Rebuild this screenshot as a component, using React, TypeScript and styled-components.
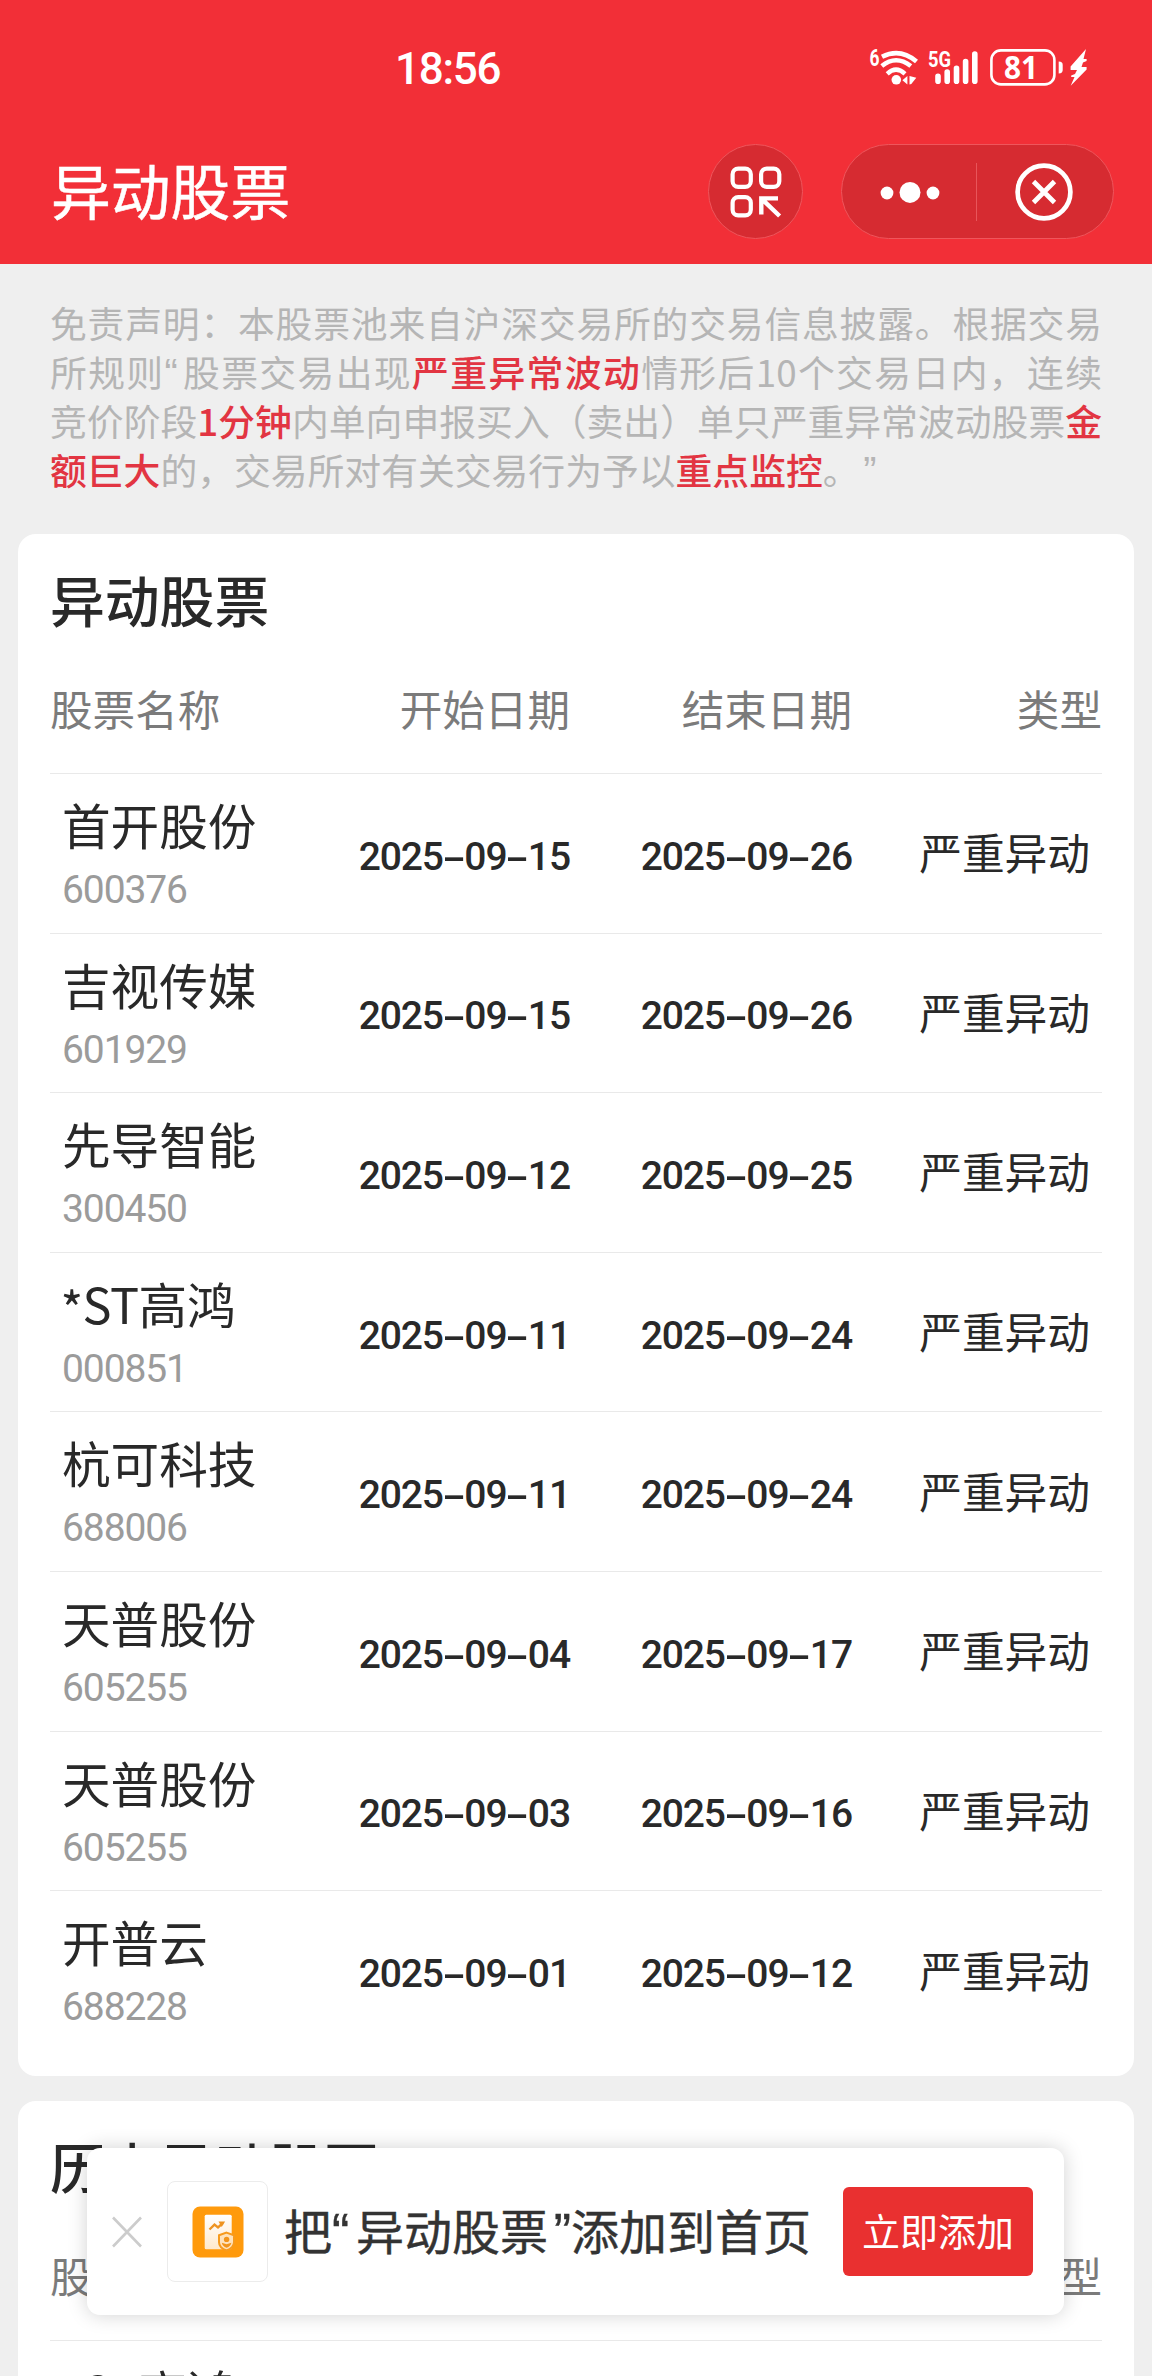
import React from 'react';
import styled, { createGlobalStyle } from 'styled-components';

const CJK = `'Noto Sans CJK SC', 'Noto Sans', sans-serif`;
const NUM = `Roboto, 'Noto Sans CJK SC', sans-serif`;

const GlobalStyle = createGlobalStyle`
  * { box-sizing: border-box; }
  body { margin: 0; background: #efefef; font-family: ${CJK}; }
`;

const Screen = styled.main`
  position: relative;
  width: 1152px;
  height: 2376px;
  overflow: hidden;
  background: #efefef;
  color: #292929;
`;

const TopArea = styled.header`
  height: 264px;
  background: #f22f37;
  color: #fff;
`;

const StatusBar = styled.div`
  display: flex;
  justify-content: space-between;
  align-items: center;
  height: 134px;
  padding: 0 62px 0 395px;
`;

const Clock = styled.time`
  font: 500 44px/50px ${NUM};
  letter-spacing: -1.3px;
  padding-top: 3px;
`;

const NavBar = styled.div`
  display: flex;
  align-items: flex-start;
  height: 130px;
  padding: 10px 38px 0 51px;
`;

const NavTitle = styled.h1`
  flex: 1;
  margin: 0;
  font-size: 59.8px;
  font-weight: 400;
  line-height: 90px;
  -webkit-text-stroke: 0.5px #fff;
`;

const RoundButton = styled.button`
  display: grid;
  place-items: center;
  width: 95px;
  height: 95px;
  padding: 0;
  margin-right: 38px;
  border: 1.5px solid #ef565c;
  border-radius: 50%;
  background: #d62b31;
`;

const Capsule = styled.div`
  display: flex;
  align-items: center;
  width: 273px;
  height: 95px;
  border: 1.5px solid #ef565c;
  border-radius: 48px;
  background: #d62b31;
`;

const CapsuleButton = styled.button<{ $w: number; $inset?: number }>`
  display: grid;
  place-items: center;
  width: ${(p) => p.$w}px;
  height: 100%;
  padding: 0 0 0 ${(p) => p.$inset ?? 0}px;
  border: 0;
  background: none;
`;

const CapsuleDivider = styled.span`
  width: 1px;
  height: 58px;
  background: #e8555a;
`;

const Notice = styled.section`
  height: 270px;
  padding: 34px 50px 0;
  color: #b5b5b5;
`;

const NoticeLine = styled.p<{ $last?: boolean }>`
  margin: 0;
  font-size: 36.8px;
  line-height: 49px;
  white-space: nowrap;
  text-align: justify;
  text-align-last: ${(p) => (p.$last ? 'left' : 'justify')};
`;

const Mark = styled.strong`
  font-weight: 500;
  color: #e23542;
`;

const Quote = styled.span<{ $w: number; $align?: string }>`
  display: inline-block;
  width: ${(p) => p.$w}px;
  font-family: 'Liberation Sans', sans-serif;
  font-size: 1.08em;
  line-height: 1;
  text-align: ${(p) => p.$align ?? 'left'};
  text-align-last: ${(p) => p.$align ?? 'left'};
`;

const Card = styled.section`
  margin: 0 18px 25px;
  padding: 31px 32px 0;
  border-radius: 18px;
  background: #fff;
`;

const StockCard = styled(Card)`
  height: 1542px;
`;

const CardTitle = styled.h2`
  margin: 0;
  font-size: 54.8px;
  font-weight: 500;
  line-height: 67px;
`;

const Row = styled.div`
  display: grid;
  grid-template-columns: 238px 282px 282px 250px;
  align-items: center;
  height: 159.6px;
  border-bottom: 1px solid #e9e9e9;
  &:last-child { border-bottom: 0; }
`;

const HeadRow = styled(Row)`
  height: 142px;
  padding-top: 11px;
`;

const HeadCell = styled.span<{ $left?: boolean }>`
  font-size: 42.6px;
  line-height: 60px;
  color: #7b7b7b;
  text-align: ${(p) => (p.$left ? 'left' : 'right')};
`;

const StockCell = styled.div`
  display: flex;
  flex-direction: column;
  gap: 17px;
  align-self: start;
  padding: 20px 0 0 12px;
  white-space: nowrap;
`;

const StockName = styled.span`
  font-size: 48.6px;
  line-height: 60px;
`;

const Star = styled.span`
  display: inline-block;
  width: 20.5px;
  text-indent: -1.5px;
  transform: translateY(4px);
`;

const Latin = styled.span`
  letter-spacing: -0.5px;
`;

const StockCode = styled.span`
  font: 400 39px/38px ${NUM};
  letter-spacing: -1.1px;
  color: #9b9b9b;
`;

const DateCell = styled.span`
  padding-top: 7px;
  font: 500 39px/50px ${NUM};
  letter-spacing: -1.1px;
  text-align: right;
`;

const Dash = styled.span`
  display: inline-block;
  width: 21.4px;
  text-align: center;
  letter-spacing: 0;
  transform: translate(0.5px, 0.5px) scaleX(1.8);
`;

const TypeCell = styled.span`
  padding: 0 12px 4px 0;
  font-size: 42.7px;
  line-height: 60px;
  text-align: right;
`;

const Toast = styled.aside`
  position: absolute;
  left: 87px;
  top: 2148px;
  display: flex;
  align-items: center;
  width: 977px;
  height: 167px;
  padding: 0 31px 0 25px;
  border-radius: 13px;
  background: #fff;
  box-shadow: 0 0 20px rgba(0, 0, 0, 0.18);
`;

const CloseIcon = styled.svg`
  flex: none;
  margin-right: 25px;
`;

const AppTile = styled.div`
  display: grid;
  place-items: center;
  flex: none;
  width: 101px;
  height: 101px;
  border: 1px solid #ececec;
  border-radius: 8px;
`;

const ToastText = styled.p`
  flex: 1;
  margin: 0 0 5px 16px;
  font-size: 48px;
  line-height: 72px;
  color: #333;
  white-space: nowrap;
  -webkit-text-stroke: 0.4px #333;
`;

const AddButton = styled.button`
  width: 190px;
  height: 89px;
  padding: 0 0 4px;
  border: 0;
  border-radius: 6px;
  background: #e93030;
  color: #fff;
  font: 400 38px/56px ${CJK};
`;

interface Stock {
  name: string;
  code: string;
  start: string;
  end: string;
}

const stocks: Stock[] = [
  { name: '首开股份', code: '600376', start: '2025-09-15', end: '2025-09-26' },
  { name: '吉视传媒', code: '601929', start: '2025-09-15', end: '2025-09-26' },
  { name: '先导智能', code: '300450', start: '2025-09-12', end: '2025-09-25' },
  { name: '*ST高鸿', code: '000851', start: '2025-09-11', end: '2025-09-24' },
  { name: '杭可科技', code: '688006', start: '2025-09-11', end: '2025-09-24' },
  { name: '天普股份', code: '605255', start: '2025-09-04', end: '2025-09-17' },
  { name: '天普股份', code: '605255', start: '2025-09-03', end: '2025-09-16' },
  { name: '开普云', code: '688228', start: '2025-09-01', end: '2025-09-12' },
];

const StatusIcons = () => (
  <svg width="222" height="44" viewBox="868 45 222 44" fill="none" stroke="#fff" strokeLinecap="butt">
    <text x="869.5" y="66" fontFamily="Roboto" fontSize="23" fontWeight="700" textLength="10" lengthAdjust="spacingAndGlyphs" fill="#fff" stroke="none">6</text>
    <path d="M882 56.8Q900 47.5 916.5 61.5" strokeWidth="4.6" />
    <path d="M881.8 66Q896 54.5 910.8 66" strokeWidth="4.6" />
    <path d="M887.2 73.8Q896 65.5 905 73.8" strokeWidth="4.4" />
    <circle cx="896.3" cy="79.8" r="4.8" fill="#fff" stroke="none" />
    <path d="M907.4 76v8.5l-5-4.3zM909.5 76v8.5l1.8-.6 5-6.2z" fill="#fff" stroke="none" />
    <text x="928" y="67" fontFamily="Roboto" fontSize="22.5" fontWeight="700" textLength="23" lengthAdjust="spacingAndGlyphs" fill="#fff" stroke="none">5G</text>
    <g strokeWidth="5.6" strokeLinecap="round">
      <path d="M938 76.2v5M947.2 72v9.2M956.5 68.3v12.9M965.6 61.6v19.6M974.8 54v27.2" />
    </g>
    <rect x="991.4" y="50.4" width="63" height="34" rx="9.5" strokeWidth="2.6" />
    <text x="1004" y="79" fontFamily="'Noto Sans'" fontSize="32" fontWeight="700" textLength="34" lengthAdjust="spacingAndGlyphs" fill="#fff" stroke="none">81</text>
    <path d="M1058.7 61.6c3 0 4 1.5 4 3.4v5c0 2-1 3.4-4 3.4z" fill="#fff" stroke="none" />
    <path d="M1086 49 1070.6 66.5V70H1077L1075 74 1071.2 75.5V77H1074.5L1070.7 85.8 1086.6 69.5V67H1081.5L1083 62.5 1086.6 61V59H1083.5Z" fill="#fff" stroke="none" />
  </svg>
);

const ScanIcon = () => (
  <svg width="52" height="52" viewBox="0 0 52 52" fill="none" stroke="#fff" strokeWidth="4.2">
    <rect x="2.6" y="2.6" width="18.2" height="18.2" rx="5.6" />
    <rect x="31.1" y="2.6" width="18.2" height="18.2" rx="5.6" />
    <rect x="2.6" y="31.2" width="18.2" height="18.2" rx="5.6" />
    <path d="M48 32.4H31.3V48.6M32.5 33.6 49.6 50" strokeWidth="4.4" />
  </svg>
);

const MoreIcon = () => (
  <svg width="60" height="24" viewBox="0 0 60 24" fill="#fff">
    <circle cx="7" cy="13" r="6.4" />
    <circle cx="30" cy="12.4" r="10.5" />
    <circle cx="53" cy="13" r="6.4" />
  </svg>
);

const ExitIcon = () => (
  <svg width="60" height="60" viewBox="0 0 60 60" fill="none" stroke="#fff">
    <circle cx="30" cy="30" r="26.4" strokeWidth="4.7" />
    <path d="M19.5 19.5 40.5 40.5M40.5 19.5 19.5 40.5" strokeWidth="4.8" />
  </svg>
);

const AppIcon = () => (
  <svg width="52" height="52" viewBox="0 0 52 52">
    <defs>
      <linearGradient id="page" x1="0" y1="0" x2="0" y2="1">
        <stop offset="0" stopColor="#fff" />
        <stop offset="1" stopColor="#ffe9cd" />
      </linearGradient>
    </defs>
    <rect x=".5" y=".5" width="51" height="51" rx="7.5" fill="#ff9a0c" />
    <rect x="12.7" y="8.7" width="27" height="34.6" rx="1.5" fill="url(#page)" />
    <path d="M17.5 23.5 22.5 18.6 26 21.4 31 16.8" fill="none" stroke="#ee9320" strokeWidth="2.3" />
    <path d="M26.5 15.4h6.6l-3.4 5.6z" fill="#ee9320" />
    <path d="M34.5 26.6 42 29.2v7c0 4-3 6.5-7.5 8.3-4.5-1.8-7.5-4.3-7.5-8.3v-7z" fill="#ffe2ba" stroke="#f79a1c" strokeWidth="2" />
    <circle cx="34.6" cy="33.4" r="2.7" fill="#f2941a" />
    <path d="M29.8 36.8l4.8 1.4 4.8-1.4c-.4 2.6-2.2 4-4.8 5-2.6-1-4.4-2.4-4.8-5z" fill="#f2941a" />
  </svg>
);

const NameText = ({ value }: { value: string }) =>
  value.startsWith('*ST') ? (
    <StockName>
      <Star>*</Star><Latin>ST</Latin>{value.slice(3)}
    </StockName>
  ) : (
    <StockName>{value}</StockName>
  );

const DateText = ({ value }: { value: string }) => {
  const [y, m, d] = value.split('-');
  return (
    <DateCell>
      {y}<Dash>-</Dash>{m}<Dash>-</Dash>{d}
    </DateCell>
  );
};

const TableHead = () => (
  <HeadRow>
    <HeadCell $left>股票名称</HeadCell>
    <HeadCell>开始日期</HeadCell>
    <HeadCell>结束日期</HeadCell>
    <HeadCell>类型</HeadCell>
  </HeadRow>
);

const StockRow = ({ stock }: { stock: Stock }) => (
  <Row>
    <StockCell>
      <NameText value={stock.name} />
      <StockCode>{stock.code}</StockCode>
    </StockCell>
    <DateText value={stock.start} />
    <DateText value={stock.end} />
    <TypeCell>严重异动</TypeCell>
  </Row>
);

export default function App() {
  return (
    <Screen>
      <GlobalStyle />
      <TopArea>
        <StatusBar>
          <Clock>18:56</Clock>
          <StatusIcons />
        </StatusBar>
        <NavBar>
          <NavTitle>异动股票</NavTitle>
          <RoundButton><ScanIcon /></RoundButton>
          <Capsule>
            <CapsuleButton $w={134} $inset={2}><MoreIcon /></CapsuleButton>
            <CapsuleDivider />
            <CapsuleButton $w={134}><ExitIcon /></CapsuleButton>
          </Capsule>
        </NavBar>
      </TopArea>

      <Notice>
        <NoticeLine>免责声明：本股票池来自沪深交易所的交易信息披露。根据交易</NoticeLine>
        <NoticeLine>所规则<Quote $w={17}>“</Quote>股票交易出现<Mark>严重异常波动</Mark>情形后10个交易日内，连续</NoticeLine>
        <NoticeLine>竞价阶段<Mark>1分钟</Mark>内单向申报买入（卖出）单只严重异常波动股票<Mark>金</Mark></NoticeLine>
        <NoticeLine $last><Mark>额巨大</Mark>的，交易所对有关交易行为予以<Mark>重点监控</Mark>。<Quote $w={17} $align="right">”</Quote></NoticeLine>
      </Notice>

      <StockCard>
        <CardTitle>异动股票</CardTitle>
        <TableHead />
        {stocks.map((s, i) => <StockRow key={i} stock={s} />)}
      </StockCard>

      <Card>
        <CardTitle>历史异动股票</CardTitle>
        <TableHead />
        <StockRow stock={stocks[3]} />
      </Card>

      <Toast>
        <CloseIcon width="30" height="32" viewBox="0 0 30 32" stroke="#ccc" strokeWidth="2.6">
          <path d="M1 1.5 29 30.5M29 1.5 1 30.5" />
        </CloseIcon>
        <AppTile><AppIcon /></AppTile>
        <ToastText>把<Quote $w={24}>“</Quote>异动股票<Quote $w={23} $align="right">”</Quote>添加到首页</ToastText>
        <AddButton>立即添加</AddButton>
      </Toast>
    </Screen>
  );
}
